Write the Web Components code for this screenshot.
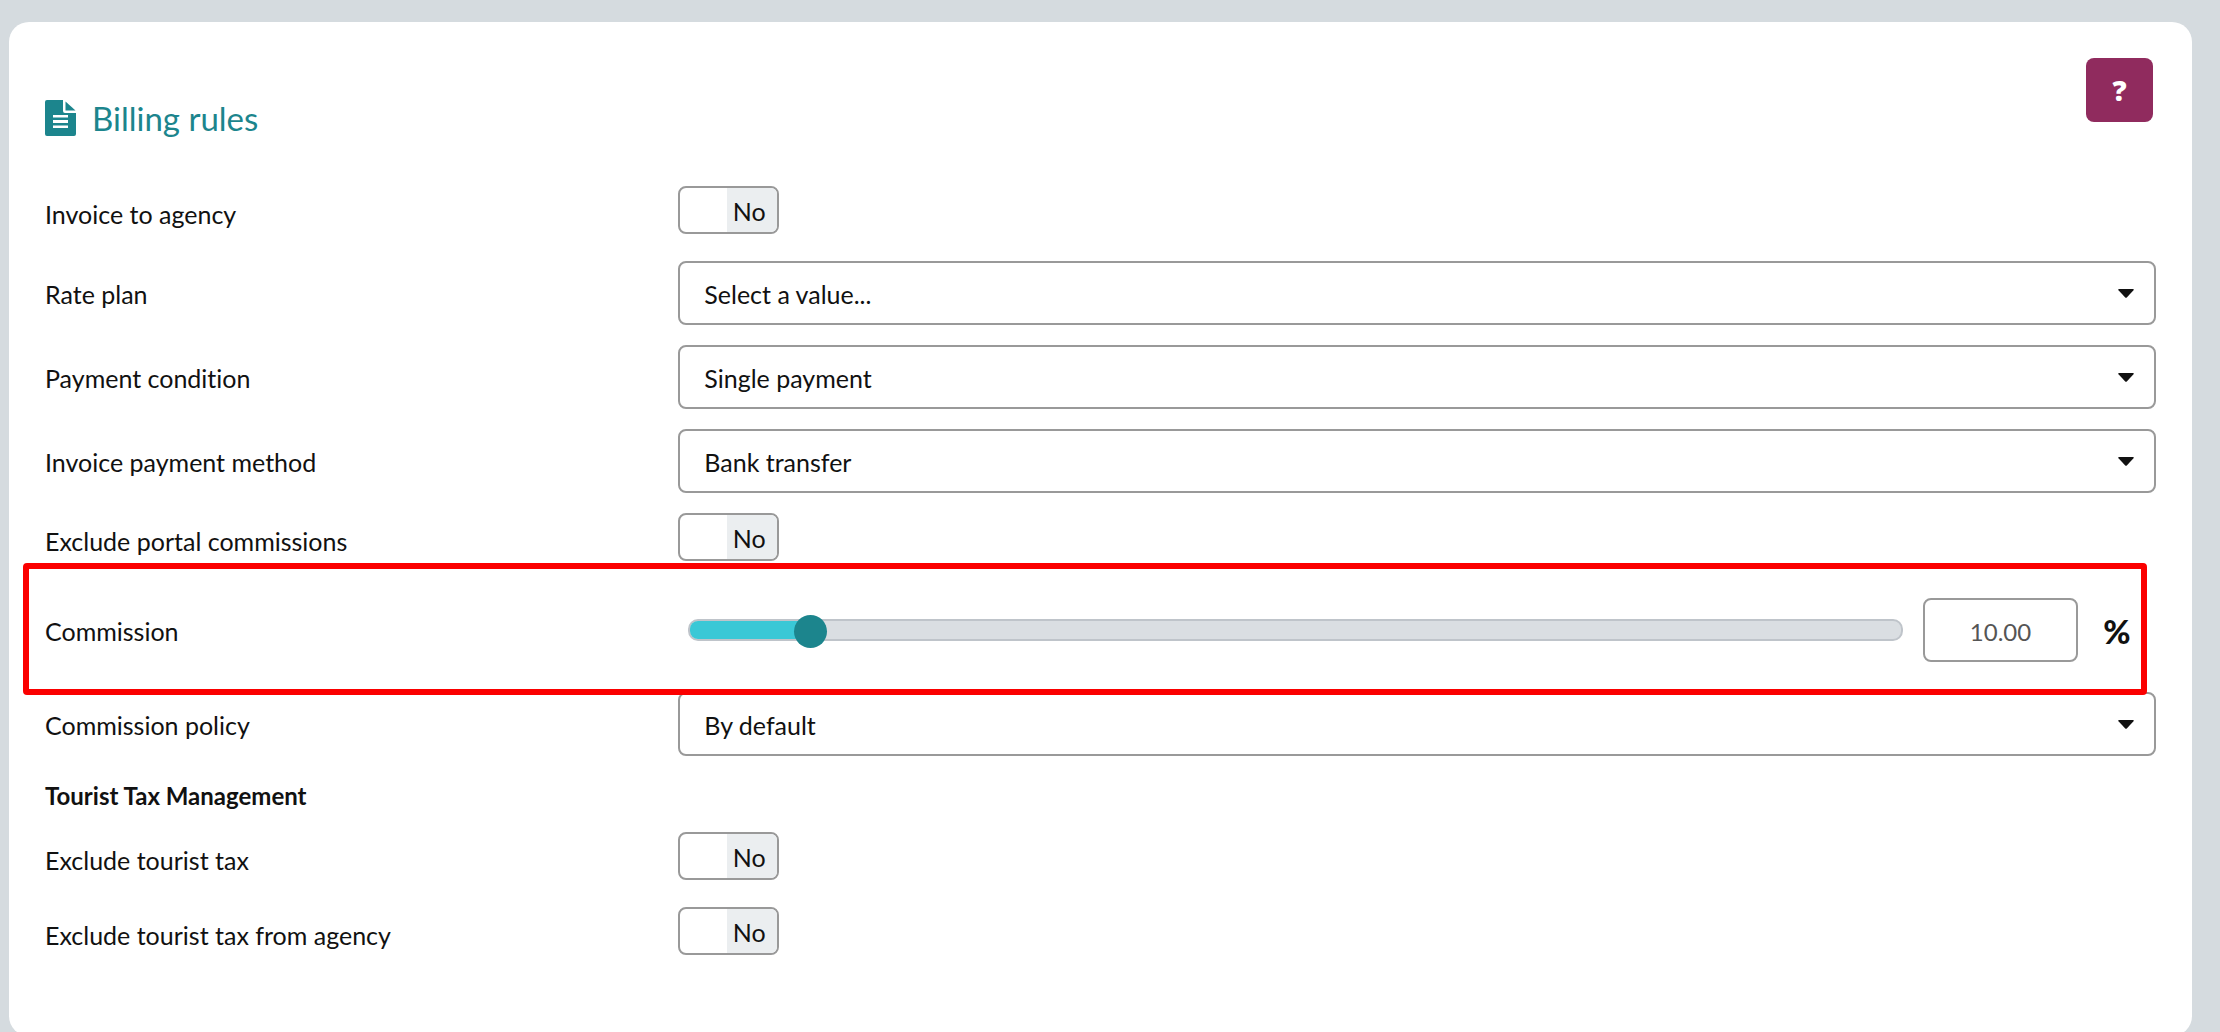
<!DOCTYPE html>
<html lang="en">
<head>
  <meta charset="UTF-8">
  <meta name="viewport" content="width=device-width, initial-scale=1.0">
  <title>Billing rules</title>
  <style>
    :root {
      --color-page: #d5dbdf;
      --color-text: #111;
      --color-primary: #1c858d;
      --color-fill: #3ac8d6;
      --color-border: #999;
      --color-help: #902b5e;
      --radius: 8px;
      scrollbar-width: none;
    }

    body {
      margin: 0;
      background: var(--color-page);
      color: var(--color-text);
      font-family: Lato, sans-serif;
      font-size: 25px;
      font-variant-ligatures: none;
      line-height: 32px;
    }
  </style>
</head>
<body>
  <billing-card heading="Billing rules">
    <switch-field label="Invoice to agency"></switch-field>
    <select-field label="Rate plan" options="Select a value..."></select-field>
    <select-field label="Payment condition" options="Single payment"></select-field>
    <select-field label="Invoice payment method" options="Bank transfer"></select-field>
    <switch-field class="flush" label="Exclude portal commissions"></switch-field>
    <range-field label="Commission" value="10" unit="%" highlighted></range-field>
    <select-field class="flush" label="Commission policy" options="By default"></select-field>
    <section-title>Tourist Tax Management</section-title>
    <switch-field label="Exclude tourist tax"></switch-field>
    <switch-field label="Exclude tourist tax from agency"></switch-field>
  </billing-card>

  <script>
    // Styles shared by every label + control row
    const rowStyles = `
      * {
        box-sizing: border-box;
      }

      :host {
        display: block;
        position: relative;
        padding-bottom: 20px;
      }

      :host(.flush) {
        padding-bottom: 0;
      }

      .row {
        display: grid;
        grid-template-columns: 3fr 7fr;
        align-items: center;
      }

      .name {
        padding-top: 2px;
      }

      input, select {
        margin: 0;
        font: inherit;
        color: inherit;
      }
    `;

    class BillingCard extends HTMLElement {
      constructor() {
        super();
        this.attachShadow({ mode: 'open' });
      }

      connectedCallback() {
        this.shadowRoot.innerHTML = `
          <style>
            :host {
              display: block;
              margin: 22px 28px 0 9px;
              padding: 36px 36px 54px;
              border-radius: 20px;
              background: #fff;
            }

            header {
              display: flex;
              justify-content: space-between;
              align-items: flex-start;
            }

            h2 {
              display: flex;
              align-items: center;
              gap: 16px;
              margin: 42px 0 50px;
              color: var(--color-primary);
              font-size: 33px;
              font-weight: 400;
              line-height: 36px;
            }

            svg {
              width: 31px;
              height: 36px;
            }
          </style>

          <header>
            <h2>
              <svg viewBox="0 0 31 36" aria-hidden="true">
                <path fill="currentColor" fill-rule="evenodd" d="M2 0H18V11Q18 13 20 13H31V34Q31 36 29 36H2Q0 36 0 34V2Q0 0 2 0ZM8 15V17.500H23V15ZM8 20V23H23V20ZM8 25.500V28H23V25.500Z"/>
                <path fill="currentColor" d="M20.500 1.500L30.500 10.500H20.500Z"/>
              </svg>
              ${this.getAttribute('heading')}
            </h2>
            <help-button></help-button>
          </header>
          <slot></slot>
        `;
      }
    }

    class HelpButton extends HTMLElement {
      constructor() {
        super();
        this.attachShadow({ mode: 'open' });
      }

      connectedCallback() {
        this.shadowRoot.innerHTML = `
          <style>
            :host {
              display: block;
              margin-right: 3px;
            }

            button {
              display: block;
              width: 67px;
              height: 64px;
              padding: 0;
              border: 0;
              border-radius: var(--radius);
              background: var(--color-help);
              color: #fff;
              font-family: "Open Sans", sans-serif;
              font-size: 28px;
              font-weight: 800;
              cursor: pointer;
            }
          </style>
          <button type="button">?</button>
        `;
      }
    }

    class SectionTitle extends HTMLElement {
      constructor() {
        super();
        this.attachShadow({ mode: 'open' });
      }

      connectedCallback() {
        this.shadowRoot.innerHTML = `
          <style>
            :host {
              display: block;
              padding: 24px 0 20px;
            }

            h3 {
              margin: 0;
              font-size: 24px;
              font-weight: 700;
            }
          </style>
          <h3><slot></slot></h3>
        `;
      }
    }

    class SelectField extends HTMLElement {
      constructor() {
        super();
        this.attachShadow({ mode: 'open' });
      }

      connectedCallback() {
        const options = this.getAttribute('options').split('|');

        this.shadowRoot.innerHTML = `
          <style>
            ${rowStyles}

            .control {
              position: relative;
            }

            select {
              display: block;
              width: 100%;
              height: 64px;
              padding: 2px 48px 0 24px;
              border: 2px solid var(--color-border);
              border-radius: var(--radius);
              background: #fff;
              appearance: none;
            }

            svg {
              position: absolute;
              top: 28px;
              right: 22px;
              width: 16px;
              height: 9px;
              pointer-events: none;
            }
          </style>

          <div class="row">
            <label class="name" for="field">${this.getAttribute('label')}</label>
            <div class="control">
              <select id="field">
                ${options.map(option => `<option>${option}</option>`).join('')}
              </select>
              <svg viewBox="0 0 16 9" aria-hidden="true">
                <path fill="currentColor" d="M1 0H15Q16.500 0 15.500 1.200L9 8.300Q8 9.300 7 8.300L0.500 1.200Q-0.500 0 1 0Z"/>
              </svg>
            </div>
          </div>
        `;
      }
    }

    class SwitchField extends HTMLElement {
      constructor() {
        super();
        this.attachShadow({ mode: 'open' });
      }

      connectedCallback() {
        this.shadowRoot.innerHTML = `
          <style>
            ${rowStyles}

            :host(:not(.flush)) {
              padding-bottom: 27px;
            }

            .name {
              padding-top: 8px;
            }

            .switch {
              position: relative;
              display: flex;
              width: 101px;
              height: 48px;
              border: 2px solid var(--color-border);
              border-radius: var(--radius);
              overflow: hidden;
            }

            input {
              position: absolute;
              inset: 0;
              width: 100%;
              height: 100%;
              opacity: 0;
              cursor: pointer;
            }

            .state {
              width: 50px;
              margin-left: auto;
              padding: 2px 6px 0 0;
              background: #ebeef0;
              line-height: 42px;
              text-align: center;
            }

            input:checked + .state {
              margin: 0 auto 0 0;
            }
          </style>

          <div class="row">
            <label class="name" for="field">${this.getAttribute('label')}</label>
            <div class="switch">
              <input id="field" type="checkbox" role="switch">
              <span class="state">No</span>
            </div>
          </div>
        `;

        const input = this.shadowRoot.querySelector('input');
        const state = this.shadowRoot.querySelector('.state');
        input.addEventListener('change', () => {
          state.textContent = input.checked ? 'Yes' : 'No';
        });
      }
    }

    class RangeField extends HTMLElement {
      constructor() {
        super();
        this.attachShadow({ mode: 'open' });
      }

      connectedCallback() {
        const label = this.getAttribute('label');
        const value = Number(this.getAttribute('value'));

        this.shadowRoot.innerHTML = `
          <style>
            ${rowStyles}

            :host {
              padding: 37px 0 30px;
            }

            /* Highlight frame, overlaps the neighbouring rows */
            :host([highlighted])::after {
              content: "";
              position: absolute;
              z-index: 1;
              inset: 2px 9px -3px -22px;
              border: 6px solid #fb0000;
              border-radius: 4px;
              pointer-events: none;
            }

            .control {
              display: flex;
              align-items: center;
            }

            .slider {
              position: relative;
              flex: 1;
              height: 22px;
              margin: 0 20px 0 10px;
              border: 2px solid #bfc4ca;
              border-radius: 10px;
              background: #dadee2;
            }

            .fill {
              width: var(--value);
              height: 100%;
              border-radius: 8px 0 0 8px;
              background: var(--color-fill);
            }

            /* Wider than the bar so the thumb centre runs from end to end */
            input[type="range"] {
              position: absolute;
              inset: -6px -18px;
              width: calc(100% + 36px);
              height: 32px;
              background: none;
              appearance: none;
            }

            input[type="range"]::-webkit-slider-thumb {
              width: 33px;
              height: 33px;
              border-radius: 50%;
              background: var(--color-primary);
              appearance: none;
            }

            input[type="text"] {
              width: 155px;
              height: 64px;
              padding: 2px 0 0;
              border: 2px solid var(--color-border);
              border-radius: var(--radius);
              background: #fff;
              color: #555;
              font-size: 24px;
              text-align: center;
            }

            .unit {
              width: 78px;
              padding-top: 2px;
              font-size: 33px;
              font-weight: 900;
              text-align: center;
            }
          </style>

          <div class="row">
            <label class="name" for="field">${label}</label>
            <div class="control">
              <div class="slider">
                <div class="fill"></div>
                <input type="range" min="0" max="100" value="${value}" aria-label="${label}">
              </div>
              <input id="field" type="text" value="${value.toFixed(2)}">
              <span class="unit">${this.getAttribute('unit')}</span>
            </div>
          </div>
        `;

        const slider = this.shadowRoot.querySelector('.slider');
        const range = this.shadowRoot.querySelector('input[type="range"]');
        const text = this.shadowRoot.querySelector('input[type="text"]');
        slider.style.setProperty('--value', `${value}%`);

        range.addEventListener('input', () => {
          text.value = Number(range.value).toFixed(2);
          slider.style.setProperty('--value', `${range.value}%`);
        });

        text.addEventListener('change', () => {
          range.value = text.value;
          slider.style.setProperty('--value', `${range.value}%`);
        });
      }
    }

    customElements.define('help-button', HelpButton);
    customElements.define('billing-card', BillingCard);
    customElements.define('section-title', SectionTitle);
    customElements.define('select-field', SelectField);
    customElements.define('switch-field', SwitchField);
    customElements.define('range-field', RangeField);
  </script>
</body>
</html>
